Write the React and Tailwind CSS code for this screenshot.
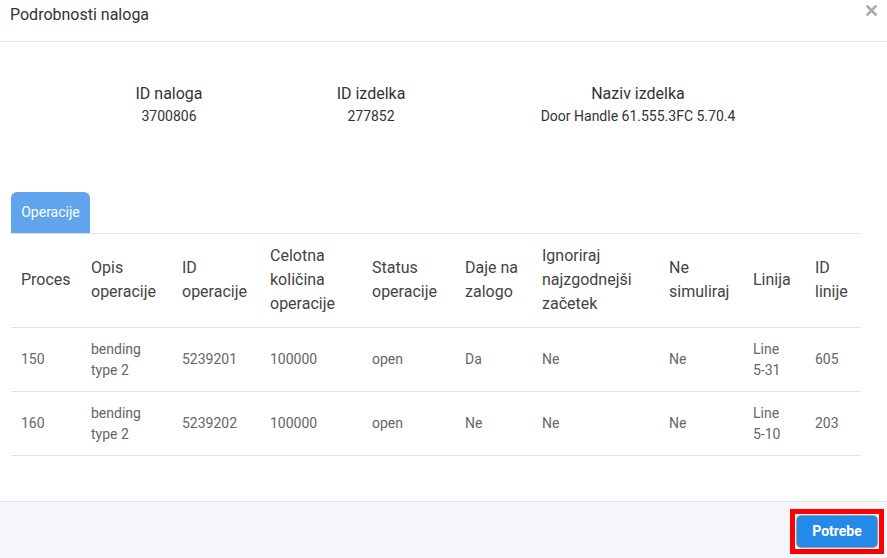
import React from "react";

const columns = [
    { label: ["Proces"], w: "w-[70px]" },
    { label: ["Opis", "operacije"], w: "w-[91px]" },
    { label: ["ID", "operacije"], w: "w-[88px]" },
    { label: ["Celotna", "količina", "operacije"], w: "w-[102px]" },
    { label: ["Status", "operacije"], w: "w-[93px]" },
    { label: ["Daje na", "zalogo"], w: "w-[77px]" },
    { label: ["Ignoriraj", "najzgodnejši", "začetek"], w: "w-[127px]" },
    { label: ["Ne", "simuliraj"], w: "w-[84px]" },
    { label: ["Linija"], w: "w-[62px]" },
    { label: ["ID", "linije"], w: "w-[55px]" },
];

const rows = [
    ["150", ["bending", "type 2"], "5239201", "100000", "open", "Da", "Ne", "Ne", ["Line", "5-31"], "605"],
    ["160", ["bending", "type 2"], "5239202", "100000", "open", "Ne", "Ne", "Ne", ["Line", "5-10"], "203"],
];

const Lines = ({ value }) => {
    if (Array.isArray(value)) {
        return value.map((line, i) => <div key={i}>{line}</div>);
    }
    return value;
};

const App = () => {
    return (
        <div className="w-[887px] h-[558px] bg-white flex flex-col overflow-hidden font-['Roboto',sans-serif]">
            {/* header */}
            <div className="h-[42px] border-b border-[#e5e5e5] flex items-start justify-between pl-[10px] pr-[10px] pt-[3px]">
                <h2 className="text-[16px] leading-[24px] text-[#333] font-normal">Podrobnosti naloga</h2>
                <button className="mt-[2px] text-[#a9a9a9]">
                    <svg width="11" height="11" viewBox="0 0 11 11">
                        <path d="M1.5 1.5 L9.5 9.5 M9.5 1.5 L1.5 9.5" stroke="currentColor" strokeWidth="2.6" strokeLinecap="square" />
                    </svg>
                </button>
            </div>

            {/* body */}
            <div className="flex-1 px-[11px] pt-[40px]">
                <div className="flex pl-[57px] text-center">
                    <div className="w-[202px]">
                        <div className="text-[16px] leading-[24px] text-[#333]">ID naloga</div>
                        <div className="text-[14px] leading-[21px] text-[#333]">3700806</div>
                    </div>
                    <div className="w-[202px]">
                        <div className="text-[16px] leading-[24px] text-[#333]">ID izdelka</div>
                        <div className="text-[14px] leading-[21px] text-[#333]">277852</div>
                    </div>
                    <div className="w-[332px]">
                        <div className="text-[16px] leading-[24px] text-[#333]">Naziv izdelka</div>
                        <div className="text-[14px] leading-[21px] text-[#333]">Door Handle 61.555.3FC 5.70.4</div>
                    </div>
                </div>

                <div className="mt-[65px] w-[849px]">
                    <div className="flex border-b border-[#dee2e6]">
                        <div className="w-[79px] h-[41px] bg-[#5fa4ec] rounded-t-[6px] text-white text-[14px] flex items-center justify-center">
                            Operacije
                        </div>
                    </div>

                    <table className="w-[849px] table-fixed border-collapse">
                        <thead>
                            <tr className="border-b border-[#dee2e6]">
                                {columns.map((col, i) => (
                                    <th key={i} className={`${col.w} text-left font-normal text-[16px] leading-[24px] text-[#444] pl-[10px] pr-[4px] pt-[10px] pb-[11px] align-middle`}>
                                        <Lines value={col.label} />
                                    </th>
                                ))}
                            </tr>
                        </thead>
                        <tbody>
                            {rows.map((row, r) => (
                                <tr key={r} className="border-b border-[#dee2e6]">
                                    {row.map((cell, c) => (
                                        <td key={c} className="text-[14px] leading-[21px] text-[#666] pl-[10px] pr-[4px] py-[10.5px] align-middle">
                                            <Lines value={cell} />
                                        </td>
                                    ))}
                                </tr>
                            ))}
                        </tbody>
                    </table>
                </div>
            </div>

            {/* footer */}
            <div className="h-[57px] border-t border-[#e5e5e5] bg-[#f5f6fa] flex justify-end items-start pt-[7px] pr-[3px]">
                <div className="border-[5px] border-[#ff0000] p-[2px]">
                    <button className="w-[80px] h-[31px] bg-[#2589e8] rounded-[4px] text-white text-[14px] font-bold shadow-[0_0_0_1px_#9ca3af]">
                        Potrebe
                    </button>
                </div>
            </div>
        </div>
    );
};

export default App;
